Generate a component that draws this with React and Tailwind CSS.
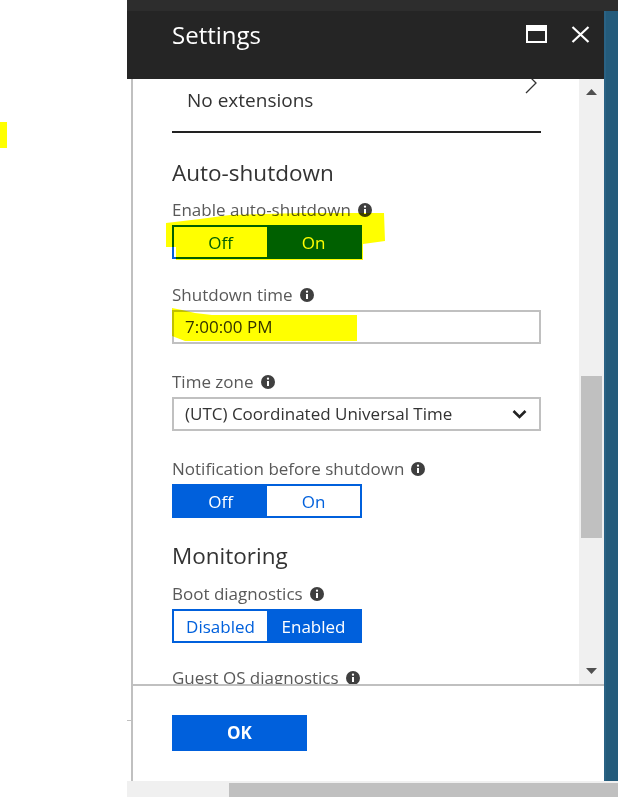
import React from 'react';

function Info() {
  return (
    <svg width="14" height="14" viewBox="0 0 14 14" className="shrink-0">
      <circle cx="7" cy="7" r="7" fill="#3f3f3f" />
      <rect x="6" y="6" width="2" height="5" fill="#fff" />
      <circle cx="7" cy="3.7" r="1.15" fill="#fff" />
    </svg>
  );
}

function Label({ children, className = '' }) {
  return (
    <div className={`flex items-center gap-[7px] text-[17px] leading-[22px] text-[#595959] mb-[4px] ${className}`}>
      <span>{children}</span>
      <Info />
    </div>
  );
}

function Toggle({ left, right, active }) {
  const on = 'flex-1 flex items-center justify-center bg-[#0060dc] text-white';
  const off = 'flex-1 flex items-center justify-center bg-white text-[#0060dc]';
  return (
    <div className="flex w-[190px] h-[34px] border-2 border-[#0060dc] text-[17px] leading-none">
      <div className={active === 0 ? on : off}>{left}</div>
      <div className={active === 1 ? on : off}>{right}</div>
    </div>
  );
}

function Field({ children }) {
  return (
    <div className="flex items-center justify-between w-[369px] h-[34px] border-2 border-[#c0c0c0] pl-[11px] pr-[12px] text-[17px] text-[#333]">
      {children}
    </div>
  );
}

export default function App() {
  return (
    <div className="relative w-[618px] h-[797px] bg-white flex overflow-hidden font-['Open_Sans',sans-serif]">
      <div className="w-[127px] shrink-0 bg-white" />

      <div className="flex flex-col flex-1 min-w-0">
        <div className="h-[11px] bg-[#2d2d2d]" />

        <div className="flex h-[770px]">
          <div className="flex flex-col w-[477px]">
            {/* blade header */}
            <div className="h-[68px] bg-[#252525] flex items-start justify-between pl-[45px] pr-[14px] pt-[8px]">
              <span className="text-[24px] leading-[32px] text-white">Settings</span>
              <div className="flex items-center gap-[24px] mt-[6px]">
                <svg width="21" height="18" viewBox="0 0 21 18">
                  <rect x="1" y="1" width="19" height="16" fill="none" stroke="#fff" strokeWidth="2" />
                  <rect x="1" y="1" width="19" height="5" fill="#fff" />
                </svg>
                <svg width="19" height="17" viewBox="0 0 19 17">
                  <path d="M1.5 1 L17.5 16 M17.5 1 L1.5 16" stroke="#fff" strokeWidth="2.2" />
                </svg>
              </div>
            </div>

            <div className="flex flex-1 min-h-0">
              <div className="w-[4px] bg-white flex flex-col">
                <div className="mt-[641px] h-[1px] bg-[#c0c0c0]" />
              </div>
              <div className="w-[2px] bg-[#c0c0c0]" />

              <div className="flex flex-col flex-1 min-w-0">
                <div className="flex h-[605px]">
                  {/* scrolled content */}
                  <div className="flex-1 overflow-hidden pl-[39px]">
                    <div className="w-[369px] h-[52px] border-b-2 border-[#222] flex justify-between items-start box-content">
                      <span className="pl-[15px] pt-[8px] text-[19px] leading-[26px] text-[#333]">No extensions</span>
                      <svg width="12" height="22" viewBox="0 0 12 22" className="-mt-[7px] mr-[4px]">
                        <path d="M1 1 L11 11 L1 21" fill="none" stroke="#333" strokeWidth="1.3" />
                      </svg>
                    </div>

                    <div className="mt-[25px] text-[22.5px] leading-[30px] text-[#333]">Auto-shutdown</div>
                    <Label className="mt-[11px]">Enable auto-shutdown</Label>
                    <Toggle left="Off" right="On" active={1} />

                    <Label className="mt-[25px]">Shutdown time</Label>
                    <Field>
                      <span>7:00:00 PM</span>
                    </Field>

                    <Label className="mt-[27px]">Time zone</Label>
                    <Field>
                      <span>(UTC) Coordinated Universal Time</span>
                      <svg width="15" height="10" viewBox="0 0 15 10">
                        <path d="M1.5 2 L7.5 8 L13.5 2" fill="none" stroke="#222" strokeWidth="2.6" />
                      </svg>
                    </Field>

                    <Label className="mt-[27px]">Notification before shutdown</Label>
                    <Toggle left="Off" right="On" active={0} />

                    <div className="mt-[23px] text-[22.5px] leading-[30px] text-[#333]">Monitoring</div>
                    <Label className="mt-[12px]">Boot diagnostics</Label>
                    <Toggle left="Disabled" right="Enabled" active={1} />

                    <Label className="mt-[24px]">Guest OS diagnostics</Label>
                  </div>

                  {/* vertical scrollbar */}
                  <div className="w-[25px] bg-[#f0f0f0] flex flex-col items-center">
                    <svg width="11" height="6" viewBox="0 0 11 6" className="mt-[10px]">
                      <path d="M0 6 L5.5 0 L11 6 Z" fill="#505050" />
                    </svg>
                    <div className="mt-[281px] w-[21px] h-[162px] bg-[#c0c0c0]" />
                    <svg width="11" height="6" viewBox="0 0 11 6" className="mt-[130px]">
                      <path d="M0 0 L11 0 L5.5 6 Z" fill="#505050" />
                    </svg>
                  </div>
                </div>

                <div className="h-[2px] bg-[#c0c0c0]" />

                <div className="flex-1 pl-[39px] pt-[29px]">
                  <button className="w-[135px] h-[36px] bg-[#0060dc] text-white text-[17px] font-bold">OK</button>
                </div>
              </div>
            </div>
          </div>

          <div className="flex-1 bg-[#245b7b] border-l-2 border-[#2a6284]" />
        </div>

        {/* horizontal scrollbar */}
        <div className="h-[16px] bg-[#f0f0f0] pt-[2px] flex">
          <div className="ml-[102px] flex-1 bg-[#c0c0c0]" />
        </div>
      </div>

      {/* yellow highlighter marks */}
      <svg width="618" height="797" viewBox="0 0 618 797" className="absolute left-0 top-0 pointer-events-none mix-blend-multiply">
        <rect x="0" y="122" width="7" height="26" fill="#ffff00" />
        <polygon
          points="166,223 200,219 230,215 300,213 384,213 385,241 363,244 363,260 176,260 176,247 166,247"
          fill="#ffff00"
        />
        <polygon
          points="172,308 182,310 195,313 212,315 357,315 357,341 185,341 172,336"
          fill="#ffff00"
        />
      </svg>
    </div>
  );
}
